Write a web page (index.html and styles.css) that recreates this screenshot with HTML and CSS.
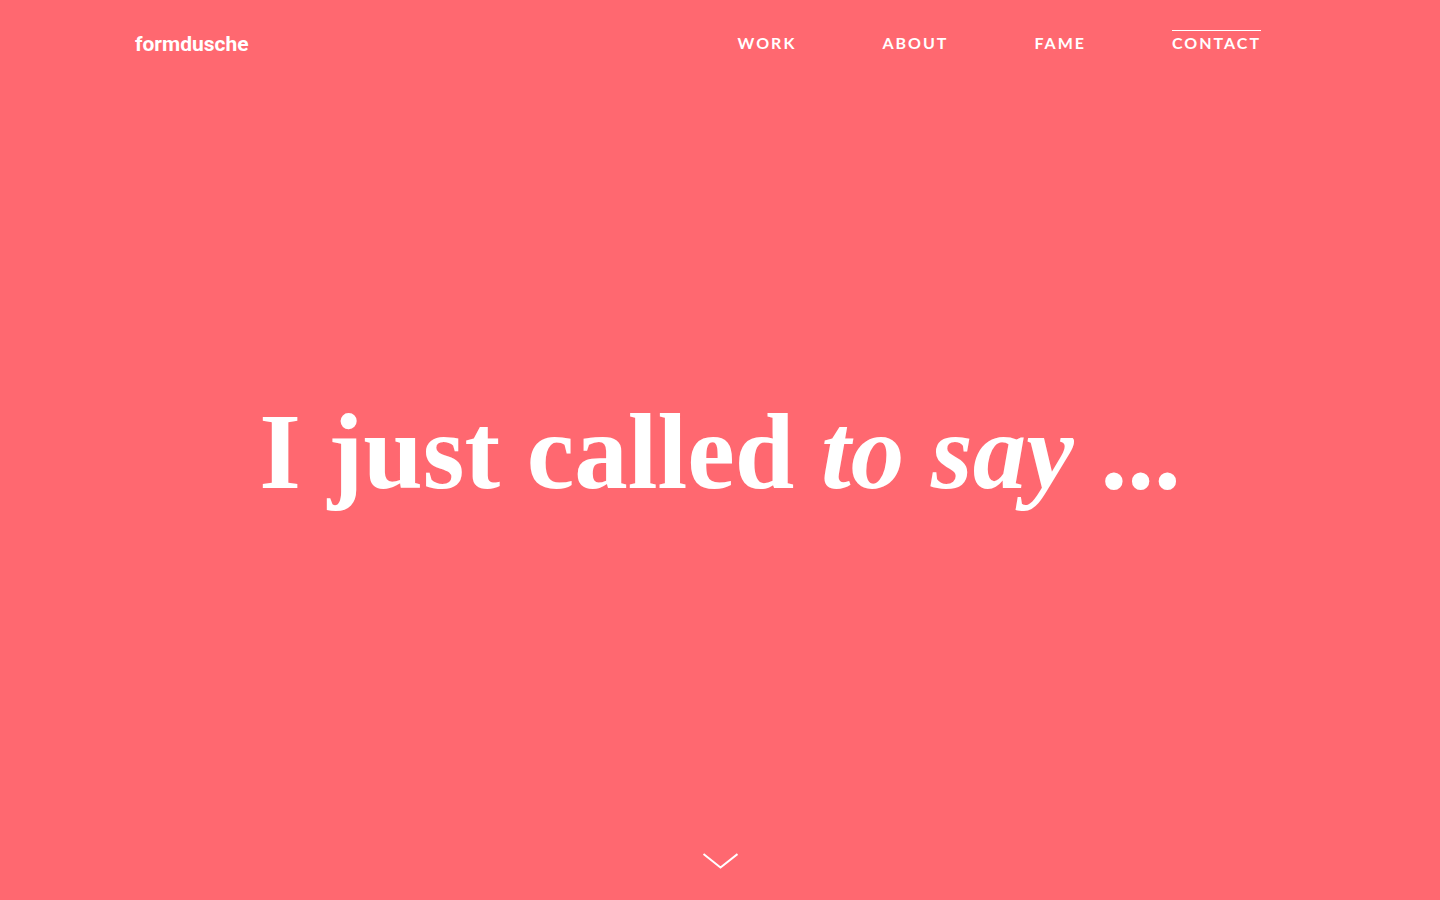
FILE: index.html
```html
<!DOCTYPE html>
<html lang="en">
<head>
    <meta charset="UTF-8">
    <meta name="viewport" content="width=device-width, initial-scale=1.0">
    <title>formdusche – Contact</title>
    <link rel="stylesheet" href="styles.css">
</head>
<body>
    <header class="header">
        <a class="logo" href="#">formdusche</a>
        <nav class="nav">
            <a href="#work">WORK</a>
            <a href="#about">ABOUT</a>
            <a href="#fame">FAME</a>
            <a class="active" href="#contact">CONTACT</a>
        </nav>
    </header>
    <main class="intro">
        <h1>I just called <em>to say</em> ...</h1>
    </main>
    <footer class="footer">
        <a class="scroll" href="#contact" aria-label="Scroll down">
            <svg width="36" height="16" viewBox="0 0 36 16" fill="none" stroke="#fff" stroke-width="2">
                <path d="M1.5 1L18.5 14.5L35.5 1"/>
            </svg>
        </a>
    </footer>
</body>
</html>
```

FILE: styles.css
```css
body {
    margin: 0;
    min-height: 100vh;
    display: flex;
    flex-direction: column;
    background: #ff6870;
    color: #fff;
    font-family: Lato, sans-serif;
}

a {
    color: inherit;
    text-decoration: none;
}

.header {
    display: flex;
    justify-content: space-between;
    align-items: flex-start;
    padding: 30px 179px 26px 135px;
}

.logo {
    font-family: Roboto, sans-serif;
    font-size: 21px;
    font-weight: bold;
    line-height: 28px;
}

.nav {
    display: flex;
    gap: 86px;
}

.nav a {
    border-top: 1px solid transparent;
    font-size: 16px;
    font-weight: bold;
    letter-spacing: 2px;
    line-height: 24px;
}

.nav .active {
    border-color: #fff;
}

.intro {
    flex: 1;
    display: flex;
    justify-content: center;
    align-items: center;
}

.intro h1 {
    margin: 0;
    font-family: "Liberation Serif", serif;
    font-size: 107px;
    font-weight: bold;
    line-height: 120px;
    text-align: center;
}

.footer {
    display: flex;
    justify-content: center;
    padding: 33px 0 31px;
}

.scroll svg {
    display: block;
}
```
